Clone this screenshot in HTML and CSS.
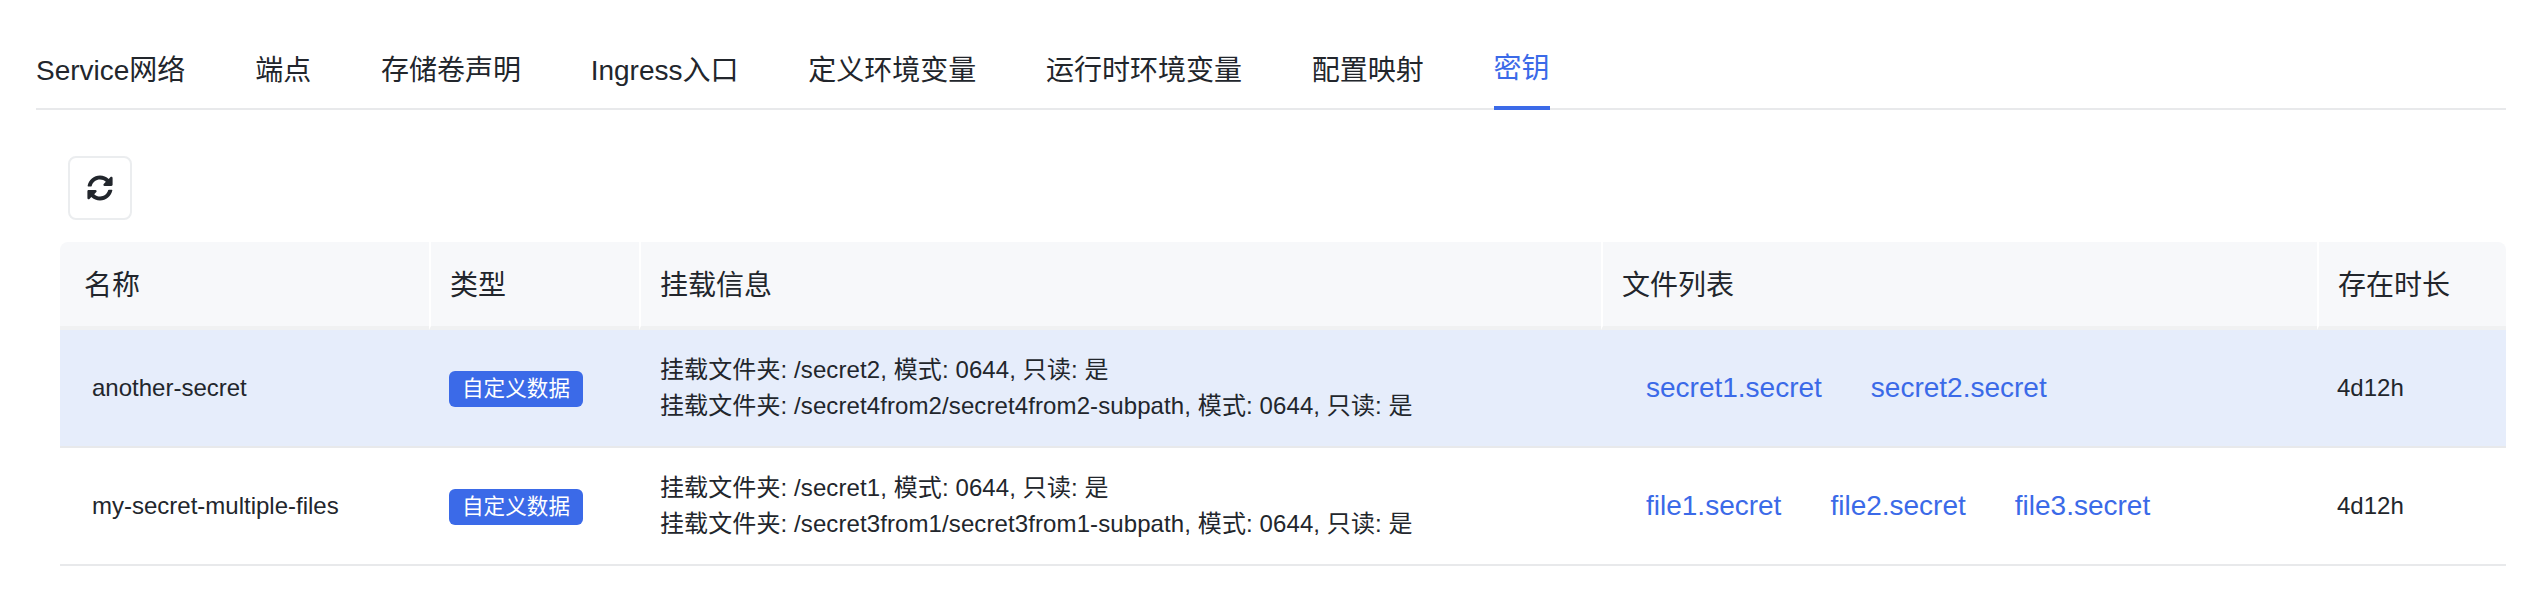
FILE: index.html
```html
<!DOCTYPE html>
<html lang="en">
<head>
    <meta charset="UTF-8">
    <title>密钥</title>
    <link rel="stylesheet" href="styles.css">
</head>
<body>
    <nav class="tabs">
        <a class="tab">Service网络</a>
        <a class="tab">端点</a>
        <a class="tab">存储卷声明</a>
        <a class="tab">Ingress入口</a>
        <a class="tab">定义环境变量</a>
        <a class="tab">运行时环境变量</a>
        <a class="tab">配置映射</a>
        <a class="tab active">密钥</a>
    </nav>
    <div class="content">
        <button class="refresh-btn" aria-label="刷新">
            <svg class="refresh-icon" viewBox="0 0 512 512">
                <path d="M370.72 133.28C339.458 104.008 298.888 87.962 255.848 88c-77.458.068-144.328 53.178-162.791 126.85-1.344 5.363-6.122 9.15-11.651 9.15H24.103c-7.498 0-13.194-6.807-11.807-14.176C33.933 94.924 134.813 8 256 8c66.448 0 126.791 26.136 171.315 68.685L463.03 40.97C478.149 25.851 504 36.559 504 57.941V192c0 13.255-10.745 24-24 24H345.941c-21.382 0-32.09-25.851-16.971-40.971l41.75-41.749zM32 296h134.059c21.382 0 32.09 25.851 16.971 40.971l-41.75 41.75c31.262 29.273 71.835 45.319 114.876 45.28 77.418-.07 144.315-53.144 162.787-126.849 1.344-5.363 6.122-9.15 11.651-9.15h57.304c7.498 0 13.194 6.807 11.807 14.176C478.067 417.076 377.187 504 256 504c-66.448 0-126.791-26.136-171.315-68.685L48.97 471.03C33.851 486.149 8 475.441 8 454.059V320c0-13.255 10.745-24 24-24z"/>
            </svg>
        </button>
        <table class="secret-table">
            <colgroup>
                <col class="col-name">
                <col class="col-type">
                <col class="col-mount">
                <col class="col-files">
                <col class="col-age">
            </colgroup>
            <thead>
                <tr>
                    <th>名称</th>
                    <th>类型</th>
                    <th>挂载信息</th>
                    <th>文件列表</th>
                    <th>存在时长</th>
                </tr>
            </thead>
            <tbody>
                <tr class="selected">
                    <td class="name">another-secret</td>
                    <td class="type"><span class="tag">自定义数据</span></td>
                    <td class="mount">
                        <div>挂载文件夹: /secret2, 模式: 0644, 只读: 是</div>
                        <div>挂载文件夹: /secret4from2/secret4from2-subpath, 模式: 0644, 只读: 是</div>
                    </td>
                    <td>
                        <div class="files">
                            <a>secret1.secret</a>
                            <a>secret2.secret</a>
                        </div>
                    </td>
                    <td>4d12h</td>
                </tr>
                <tr>
                    <td class="name">my-secret-multiple-files</td>
                    <td class="type"><span class="tag">自定义数据</span></td>
                    <td class="mount">
                        <div>挂载文件夹: /secret1, 模式: 0644, 只读: 是</div>
                        <div>挂载文件夹: /secret3from1/secret3from1-subpath, 模式: 0644, 只读: 是</div>
                    </td>
                    <td>
                        <div class="files">
                            <a>file1.secret</a>
                            <a>file2.secret</a>
                            <a>file3.secret</a>
                        </div>
                    </td>
                    <td>4d12h</td>
                </tr>
            </tbody>
        </table>
    </div>
</body>
</html>
```

FILE: styles.css
```css
body {
    margin: 0;
    background-color: white;
    color: #22262c;
    font-family: "Liberation Sans", "Noto Sans CJK SC", sans-serif;
}
.tabs {
    display: flex;
    gap: 69.75px;
    height: 108px;
    margin: 0 30px 0 36px;
    border-bottom: 2px solid #e8e9eb;
}
.tab {
    height: 110px;
    box-sizing: border-box;
    padding-top: 50px;
    font-size: 28px;
    line-height: 42px;
    white-space: nowrap;
}
.tab.active {
    padding-top: 48px;
    color: #3b6ae8;
    border-bottom: 4px solid #3b6ae8;
}
.content {
    padding: 46px 30px 0 60px;
}
.refresh-btn {
    display: flex;
    align-items: center;
    justify-content: center;
    width: 64px;
    height: 64px;
    margin: 0 0 22px 8px;
    padding: 0;
    background-color: white;
    border: 2px solid #ebedef;
    border-radius: 8px;
}
.refresh-icon {
    width: 26px;
    height: 26px;
    fill: #22262c;
}
.secret-table {
    width: 2446px;
    table-layout: fixed;
    border-collapse: separate;
    border-spacing: 0;
    font-size: 24px;
}
.col-name { width: 369px; }
.col-type { width: 210px; }
.col-mount { width: 962px; }
.col-files { width: 716px; }
.col-age { width: 189px; }
th {
    height: 82px;
    padding: 0 0 2px 19px;
    box-sizing: content-box;
    background-color: #f7f8fa;
    border-bottom: 4px solid #f0f1f2;
    border-left: 2px solid white;
    font-size: 28px;
    font-weight: normal;
    text-align: left;
}
th:first-child {
    padding-left: 24px;
    border-left: none;
    border-top-left-radius: 8px;
}
th:last-child {
    border-top-right-radius: 8px;
}
td {
    height: 116px;
    padding: 0 0 0 20px;
    border-bottom: 2px solid #e8e9eb;
    line-height: 36px;
}
td.name {
    padding-left: 32px;
}
td.type {
    padding-left: 20px;
}
td.mount {
    padding-left: 21px;
    letter-spacing: 0.1px;
}
.selected td {
    background-color: #e6edfb;
}
.tag {
    display: inline-block;
    height: 36px;
    padding: 0 13px;
    background-color: #3b6ae8;
    border-radius: 6px;
    color: white;
    font-size: 21.6px;
    line-height: 36px;
    vertical-align: middle;
}
.files {
    display: flex;
    gap: 49px;
    padding-left: 25px;
    color: #3b6ae8;
    font-size: 28px;
}
```
